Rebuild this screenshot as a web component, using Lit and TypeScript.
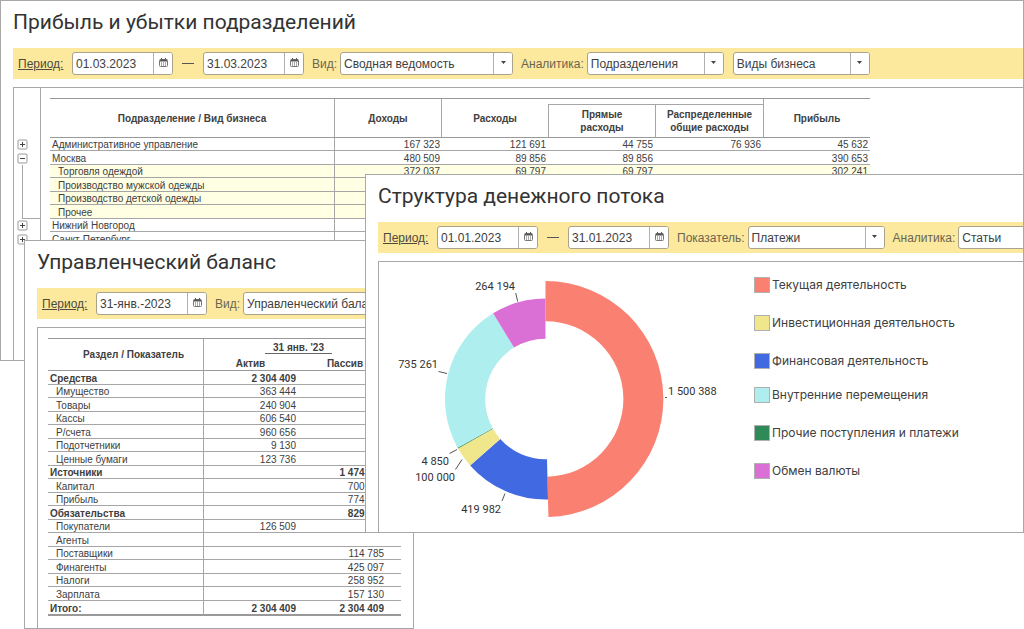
import { LitElement, html, svg, css, nothing } from "lit";
import { customElement } from "lit/decorators.js";

interface Slice {
  value: number;
  name: string;
  color: string;
  raised?: boolean;
  label: { x: number; y: number; anchor: "start" | "end" };
  leader: [number, number, number, number];
}

const SLICES: Slice[] = [
  { value: 1500388, name: "Текущая деятельность", color: "#fa8072", raised: true, label: { x: 668, y: 395, anchor: "start" }, leader: [665, 397.5, 667, 397.5] },
  { value: 419982, name: "Финансовая деятельность", color: "#4169e1", label: { x: 501, y: 513, anchor: "end" }, leader: [502, 501, 505, 493.5] },
  { value: 100000, name: "Инвестиционная деятельность", color: "#f0e68c", label: { x: 455, y: 481, anchor: "end" }, leader: [455.5, 469.5, 462, 459.5] },
  { value: 4850, name: "Прочие поступления и платежи", color: "#2e8b57", label: { x: 449, y: 465, anchor: "end" }, leader: [449.5, 453.5, 457, 449.5] },
  { value: 735261, name: "Внутренние перемещения", color: "#afeeee", label: { x: 438, y: 368, anchor: "end" }, leader: [438.5, 371.5, 447, 373.5] },
  { value: 264194, name: "Обмен валюты", color: "#da70d6", label: { x: 515, y: 290, anchor: "end" }, leader: [515.7, 293, 517.7, 301.5] },
];

const format = (n: number) => String(n).replace(/\B(?=(\d{3})+$)/g, " ");

const CX = 545.5;
const CY = 399;

function ringPath(from: number, to: number, outer: number, inner: number) {
  const at = (angle: number, r: number) =>
    `${(CX + r * Math.sin(angle)).toFixed(2)} ${(CY - r * Math.cos(angle)).toFixed(2)}`;
  const large = to - from > Math.PI ? 1 : 0;
  return `M${at(from, outer)}A${outer} ${outer} 0 ${large} 1 ${at(to, outer)}L${at(to, inner)}A${inner} ${inner} 0 ${large} 0 ${at(from, inner)}Z`;
}

@customElement("donut-chart")
export class DonutChart extends LitElement {
  static styles = css`
    :host { display: block; }
    .chart { display: block; width: 340px; height: 250px; }
    .value { font: 11px Roboto, "Liberation Sans", sans-serif; fill: #333; }
    .leader { stroke: #555; stroke-width: 1; }
  `;

  render() {
    const total = SLICES.reduce((sum, s) => sum + s.value, 0);
    let angle = 0;
    return html`<svg class="chart" viewBox="390 270 340 250" role="img" aria-label="Структура денежного потока">
      ${SLICES.map((s) => {
        const from = angle;
        angle += (s.value / total) * Math.PI * 2;
        const [x1, y1, x2, y2] = s.leader;
        return svg`
          <path d=${ringPath(from, angle, s.raised ? 118 : 100.5, s.raised ? 77.7 : 60.3)} fill=${s.color}></path>
          <line class="leader" x1=${x1} y1=${y1} x2=${x2} y2=${y2}></line>
          <text class="value" x=${s.label.x} y=${s.label.y} text-anchor=${s.label.anchor}>${format(s.value)}</text>`;
      })}
    </svg>`;
  }
}

const LEGEND = [
  [SLICES[0], SLICES[2], SLICES[1]],
  [SLICES[4], SLICES[3], SLICES[5]],
];

interface ProfitRow { name: string; sub?: boolean; values: string[] }

const PROFIT: ProfitRow[] = [
  { name: "Административное управление", values: ["167 323", "121 691", "44 755", "76 936", "45 632"] },
  { name: "Москва", values: ["480 509", "89 856", "89 856", "", "390 653"] },
  { name: "Торговля одеждой", sub: true, values: ["372 037", "69 797", "69 797", "", "302 241"] },
  { name: "Производство мужской одежды", sub: true, values: ["", "", "", "", ""] },
  { name: "Производство детской одежды", sub: true, values: ["", "", "", "", ""] },
  { name: "Прочее", sub: true, values: ["", "", "", "", ""] },
  { name: "Нижний Новгород", values: ["", "", "", "", ""] },
  { name: "Санкт-Петербург", values: ["", "", "", "", ""] },
];

interface BalanceRow { name: string; total?: boolean; active?: string; passive?: string }

const BALANCE: BalanceRow[] = [
  { name: "Средства", total: true, active: "2 304 409" },
  { name: "Имущество", active: "363 444" },
  { name: "Товары", active: "240 904" },
  { name: "Кассы", active: "606 540" },
  { name: "Р/счета", active: "960 656" },
  { name: "Подотчетники", active: "9 130" },
  { name: "Ценные бумаги", active: "123 736" },
  { name: "Источники", total: true, passive: "1 474 900" },
  { name: "Капитал", passive: "700 000" },
  { name: "Прибыль", passive: "774 900" },
  { name: "Обязательства", total: true, passive: "829 509" },
  { name: "Покупатели", active: "126 509" },
  { name: "Агенты" },
  { name: "Поставщики", passive: "114 785" },
  { name: "Финагенты", passive: "425 097" },
  { name: "Налоги", passive: "258 952" },
  { name: "Зарплата", passive: "157 130" },
  { name: "Итого:", total: true, active: "2 304 409", passive: "2 304 409" },
];

@customElement("app-root")
export class AppRoot extends LitElement {
  static styles = css`
    :host {
      display: block;
      position: relative;
      height: 100vh;
      min-height: 629px;
      overflow: hidden;
      background: #fff;
      color: #404040;
      font-family: "Liberation Sans", Arial, sans-serif;
      font-size: 12px;
    }
    * { box-sizing: border-box; }

    /* windows */
    .window {
      position: absolute;
      display: flex;
      flex-direction: column;
      padding-left: 12px;
      border: 1px solid #a8a8a8;
      background: #fff;
      overflow: hidden;
    }
    .profit { top: 0; left: 0; right: 0; height: 361px; }
    .balance { top: 240px; left: 24px; width: 390px; height: 389px; }
    .cash { top: 174px; left: 365px; right: 0; height: 359px; }
    .title {
      margin: 0;
      height: 47px;
      padding-top: 8px;
      font-family: Roboto, "Liberation Sans", sans-serif;
      font-size: 21px;
      line-height: 26px;
      font-weight: 400;
      color: #333;
      white-space: nowrap;
    }
    .panel {
      flex: 1;
      display: flex;
      margin-top: 8px;
      border-top: 1px solid #a8a8a8;
      border-left: 1px solid #a8a8a8;
    }

    /* filter bar */
    .filters {
      display: flex;
      flex: none;
      align-items: center;
      height: 31px;
      padding-left: 5px;
      background: #fce99e;
      white-space: nowrap;
      overflow: hidden;
    }
    .caption { flex: none; padding-left: 8px; padding-right: 3px; color: #6b6550; }
    .period { flex: none; width: 54px; color: #4d4a3d; text-decoration: underline; }
    .dash { flex: none; width: 12px; height: 1px; margin: 0 9px; background: #555; }
    .field {
      flex: none;
      display: grid;
      grid-template-columns: 1fr 19px;
      height: 23px;
      border: 1px solid #a9a38c;
      border-radius: 3px;
      background: #fff;
      overflow: hidden;
    }
    .field + .field { margin-left: 9px; }
    .date { width: 101px; }
    .date-wide { width: 111px; }
    .combo { width: 137px; }
    .combo-wide { width: 173px; }
    .entry {
      grid-area: 1 / 1;
      min-width: 0;
      width: 100%;
      padding: 0 0 0 3px;
      border: 0;
      background: none;
      color: #404040;
      font: inherit;
      appearance: none;
      outline-offset: -2px;
    }
    select.entry { grid-column: 1 / -1; }
    .end {
      grid-area: 1 / 2;
      display: flex;
      align-items: center;
      justify-content: center;
      padding: 0 0 2px;
      border: 0;
      border-left: 1px solid #b0b0b0;
      background: #fff;
    }
    .arrow { pointer-events: none; }

    /* reports */
    table {
      table-layout: fixed;
      border-collapse: separate;
      border-spacing: 0;
      border-top: 1px solid #999;
      font-size: 10px;
      line-height: 13px;
    }
    th, td { padding: 0 2px; white-space: nowrap; }
    th { font-weight: 700; }
    tbody th, tbody td {
      height: 13px;
      padding-top: 2px;
      border-bottom: 1px solid #a6a6a6;
      line-height: 10px;
    }
    tbody th { text-align: left; font-weight: 400; border-right: 1px solid #a6a6a6; }
    td { text-align: right; }
    .line-left { border-left: 1px solid #a6a6a6; }
    .line-right { border-right: 1px solid #a6a6a6; }
    .line-bottom { border-bottom: 1px solid #999; }
    .line-top { border-top: 1px solid #a6a6a6; }

    .gutter {
      flex: none;
      width: 27px;
      padding-top: 50px;
      border-right: 1px solid #a8a8a8;
    }
    .node { display: flex; align-items: center; height: 14px; padding-left: 3px; }
    .node-short { height: 13px; }
    .toggle { display: flex; padding: 0; border: 0; background: none; }
    .bracket {
      height: 54px;
      margin-left: 8px;
      border-left: 1px solid #a8a8a8;
      border-bottom: 1px solid #a8a8a8;
    }
    .profit-table { width: 820px; margin: 10px 0 auto 9px; }
    .profit-table tbody tr:nth-child(even) > * { height: 14px; }
    .spacer { height: 5px; }
    .lower { height: 34px; }
    .sub > * { background: #ffffe4; }
    .sub > th { padding-left: 8px; }

    .balance-table { width: 353px; margin: 10px 0 auto 10px; }
    .balance-table tbody tr:nth-child(odd) > * { height: 14px; }
    .balance-table tbody th { padding-left: 8px; }
    .balance-table td:nth-child(2) { padding-right: 1px; }
    .balance-table td:nth-child(3) { padding-right: 17px; }
    .balance-table .total > * { font-weight: 700; }
    .balance-table .total > th { padding-left: 2px; }
    .balance-table tbody tr:last-child > * { border-bottom: 2px solid #999; height: 15px; }
    .section-head { padding-left: 18px; }
    .day-cell { height: 17px; padding: 4px 10px 0 2px; vertical-align: top; }
    .day { display: block; width: 67px; margin: 0 auto; border-bottom: 1px solid #666; line-height: 10px; }
    .side { height: 15px; }
    .side-last { padding-right: 10px; }

    /* chart */
    .donut { flex: none; margin: 8px 0 0 11px; }
    .legend {
      display: flex;
      flex-direction: column;
      gap: 18px;
      margin: 15px 0 0 24px;
      font: 12px Inter, "Liberation Sans", sans-serif;
    }
    .legend-group {
      display: flex;
      flex-direction: column;
      gap: 22px;
      margin: 0;
      padding: 0;
      list-style: none;
    }
    .legend-item { display: flex; align-items: center; gap: 2px; height: 16px; line-height: 16px; white-space: nowrap; }
    .swatch { width: 16px; height: 16px; border: 1px solid #b0b0b0; }
  `;

  private date(id: string, value: string, label?: string, wide = false) {
    return html`<span class="field ${wide ? "date-wide" : "date"}">
      <input class="entry" id=${id} type="text" .value=${value} aria-label=${label ?? nothing} />
      <button class="end" type="button" aria-label="Выбрать дату">
        <svg width="9" height="10" viewBox="0 0 9 10">
          <path d="M2.5 0v2M6.5 0v2" stroke="#555" />
          <rect x=".5" y="1.5" width="8" height="7" rx="1" fill="none" stroke="#777" />
          <path d="M1 2.5h7" stroke="#555" stroke-width="2" />
          <path d="M2 5h1M4 5h1M6 5h1M2 7h1M4 7h1M6 7h1" stroke="#555" />
        </svg>
      </button>
    </span>`;
  }

  private combo(id: string, value: string, wide = false, label?: string) {
    return html`<span class="field ${wide ? "combo-wide" : "combo"}">
      <select class="entry" id=${id} aria-label=${label ?? nothing}><option>${value}</option></select>
      <span class="end arrow"><svg width="5" height="3" viewBox="0 0 5 3"><path d="M0 0h5L2.5 3z" fill="#444" /></svg></span>
    </span>`;
  }

  private node(open: boolean, short: boolean) {
    return html`<div class="node ${short ? "node-short" : ""}">
      <button class="toggle" type="button" aria-label=${open ? "Свернуть" : "Развернуть"}>
        <svg width="11" height="11" viewBox="0 0 11 11">
          <rect x="1" y="1" width="9" height="9" rx="1" fill="#fff" stroke="#999" />
          <path d=${open ? "M3 5.5h5" : "M3 5.5h5M5.5 3v5"} stroke="#444" />
        </svg>
      </button>
    </div>`;
  }

  render() {
    return html`
      <section class="window profit">
        <h2 class="title">Прибыль и убытки подразделений</h2>
        <div class="filters">
          <label class="period" for="p-from">Период:</label>
          ${this.date("p-from", "01.03.2023")}
          <span class="dash"></span>
          ${this.date("p-to", "31.03.2023", "Конец периода")}
          <label class="caption" for="p-view">Вид:</label>
          ${this.combo("p-view", "Сводная ведомость", true)}
          <label class="caption" for="p-by">Аналитика:</label>
          ${this.combo("p-by", "Подразделения")}
          ${this.combo("p-by2", "Виды бизнеса", false, "Вторая аналитика")}
        </div>
        <div class="panel">
          <div class="gutter">
            ${this.node(false, true)}
            ${this.node(true, false)}
            <div class="bracket"></div>
            ${this.node(false, true)}
            ${this.node(false, false)}
          </div>
          <table class="profit-table">
            <colgroup>
              <col style="width:285px" /><col style="width:107px" /><col style="width:106px" />
              <col style="width:107px" /><col style="width:108px" /><col style="width:107px" />
            </colgroup>
            <thead>
              <tr>
                <th class="line-right line-bottom" rowspan="2">Подразделение / Вид бизнеса</th>
                <th class="line-right line-bottom" rowspan="2">Доходы</th>
                <th class="line-bottom" rowspan="2">Расходы</th>
                <td class="spacer" colspan="2"></td>
                <th class="line-left line-bottom" rowspan="2">Прибыль</th>
              </tr>
              <tr>
                <th class="lower line-top line-left line-bottom">Прямые<br />расходы</th>
                <th class="lower line-top line-left line-bottom">Распределенные<br />общие расходы</th>
              </tr>
            </thead>
            <tbody>
              ${PROFIT.map((r) => html`<tr class=${r.sub ? "sub" : ""}>
                <th>${r.name}</th>${r.values.map((v) => html`<td>${v}</td>`)}
              </tr>`)}
            </tbody>
          </table>
        </div>
      </section>

      <section class="window balance">
        <h2 class="title">Управленческий баланс</h2>
        <div class="filters">
          <label class="period" for="b-date">Период:</label>
          ${this.date("b-date", "31-янв.-2023", undefined, true)}
          <label class="caption" for="b-view">Вид:</label>
          ${this.combo("b-view", "Управленческий баланс", true)}
        </div>
        <div class="panel">
          <table class="balance-table">
            <colgroup><col style="width:156px" /><col style="width:93px" /><col style="width:104px" /></colgroup>
            <thead>
              <tr>
                <th class="section-head line-right line-bottom" rowspan="2">Раздел / Показатель</th>
                <th class="day-cell" colspan="2"><span class="day">31 янв. '23</span></th>
              </tr>
              <tr>
                <th class="side line-bottom">Актив</th>
                <th class="side side-last line-bottom">Пассив</th>
              </tr>
            </thead>
            <tbody>
              ${BALANCE.map((r) => html`<tr class=${r.total ? "total" : ""}>
                <th>${r.name}</th><td>${r.active}</td><td>${r.passive}</td>
              </tr>`)}
            </tbody>
          </table>
        </div>
      </section>

      <section class="window cash">
        <h2 class="title">Структура денежного потока</h2>
        <div class="filters">
          <label class="period" for="c-from">Период:</label>
          ${this.date("c-from", "01.01.2023")}
          <span class="dash"></span>
          ${this.date("c-to", "31.01.2023", "Конец периода")}
          <label class="caption" for="c-measure">Показатель:</label>
          ${this.combo("c-measure", "Платежи")}
          <label class="caption" for="c-by">Аналитика:</label>
          ${this.combo("c-by", "Статьи")}
        </div>
        <div class="panel">
          <donut-chart class="donut"></donut-chart>
          <div class="legend">
            ${LEGEND.map((group) => html`<ul class="legend-group">
              ${group.map((s) => html`<li class="legend-item">
                <span class="swatch" style="background:${s.color}"></span>${s.name}
              </li>`)}
            </ul>`)}
          </div>
        </div>
      </section>
    `;
  }
}
